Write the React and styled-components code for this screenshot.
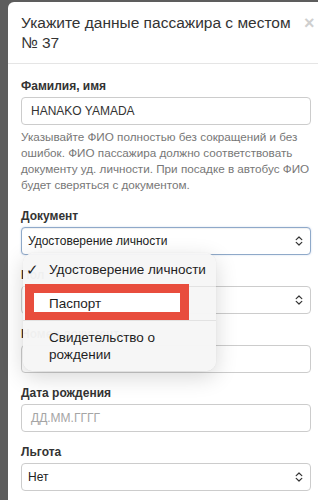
import React from 'react';
import styled, { createGlobalStyle, css } from 'styled-components';

const GlobalStyle = createGlobalStyle`
  html, body {
    margin: 0;
    padding: 0;
    overflow: hidden;
    background: #5d5d5d;
  }
  body {
    font-family: "Liberation Sans", Helvetica, Arial, sans-serif;
    color: #333;
  }
`;

const Backdrop = styled.div`
  height: 100vh;
  padding: 2px 0 0 8px;
  box-sizing: border-box;
`;

const Modal = styled.div`
  position: relative;
  width: 316px;
  min-height: 498px;
  background: #fff;
  border-radius: 6px 0 0 0;
`;

const Header = styled.div`
  display: flex;
  align-items: flex-start;
  padding: 11px 10px 10px 13px;
  border-bottom: 1px solid #e5e5e5;
`;

const Title = styled.h4`
  flex: 1;
  margin: 0;
  font-size: 15.5px;
  line-height: 20px;
  font-weight: normal;
  color: #333;
`;

const Close = styled.span`
  width: 10px;
  margin-top: 1px;
  font-size: 18px;
  line-height: 18px;
  font-weight: bold;
  color: #cfcfcf;
`;

const Body = styled.div`
  padding: 14px 13px 0 13px;
`;

const Group = styled.div`
  margin-bottom: ${({ $tight }) => ($tight ? '4px' : '12px')};
`;

const Label = styled.div`
  font-size: 12px;
  line-height: 16px;
  font-weight: bold;
  color: #333;
  margin-bottom: 3px;
`;

const fieldBox = css`
  display: flex;
  align-items: center;
  height: 28px;
  box-sizing: border-box;
  border: 1px solid #ccc;
  border-radius: 4px;
  background: #fff;
  font-size: 12px;
`;

const Input = styled.div`
  ${fieldBox};
  padding: 0 9px;
  color: ${({ $placeholder }) => ($placeholder ? '#a5a5a5' : '#333')};
`;

const Select = styled.div`
  ${fieldBox};
  justify-content: space-between;
  padding: 0 7px 0 6px;
  color: #222;
  ${({ $focused }) =>
    $focused &&
    css`
      border-color: #8fa9c9;
      box-shadow: inset 0 1px 1px rgba(0, 0, 0, 0.06), 0 0 2px rgba(102, 140, 200, 0.35);
    `}
`;

const Help = styled.p`
  margin: 4px 0 15px;
  font-size: 11.7px;
  line-height: 16px;
  color: #777;
`;

const Chevron = () => (
  <svg width="8" height="10" viewBox="0 0 8 10" fill="none" stroke="#333" strokeWidth="1.2" strokeLinecap="round" strokeLinejoin="round">
    <path d="M1.2 3.6 L4 1 L6.8 3.6" />
    <path d="M1.2 6.4 L4 9 L6.8 6.4" />
  </svg>
);

const Menu = styled.div`
  position: absolute;
  left: 15px;
  top: 251px;
  width: 193px;
  border-radius: 10px;
  background: rgba(246, 246, 246, 0.97);
  box-shadow: 0 6px 22px rgba(0, 0, 0, 0.16), 0 0 1px rgba(0, 0, 0, 0.15);
  overflow: hidden;
`;

const Item = styled.div`
  position: relative;
  display: flex;
  padding: 8px 4px 8px 26px;
  font-size: 13.5px;
  line-height: 17px;
  color: #1e1e1e;
  & + & {
    border-top: 1px solid #e2e2e2;
  }
`;

const Check = styled.span`
  position: absolute;
  left: 3px;
  top: 8px;
  font-size: 15px;
`;

const ItemText = styled.span`
  position: relative;
  z-index: 1;
  white-space: ${({ $wrap }) => ($wrap ? 'normal' : 'nowrap')};
`;

const Marker = styled.span`
  position: absolute;
  left: 2px;
  top: -3px;
  width: 164px;
  height: 37px;
  box-sizing: border-box;
  border: 9px solid #e84d3d;
  background: #fff;
`;

const App = () => (
  <>
    <GlobalStyle />
    <Backdrop>
      <Modal>
        <Header>
          <Title>Укажите данные пассажира с местом № 37</Title>
          <Close>×</Close>
        </Header>
        <Body>
          <Group $tight>
            <Label>Фамилия, имя</Label>
            <Input>HANAKO YAMADA</Input>
          </Group>
          <Help>
            Указывайте ФИО полностью без сокращений и без ошибок. ФИО пассажира должно соответствовать
            документу уд. личности. При посадке в автобус ФИО будет сверяться с документом.
          </Help>
          <Group>
            <Label>Документ</Label>
            <Select $focused>
              <span>Удостоверение личности</span>
              <Chevron />
            </Select>
          </Group>
          <Group>
            <Label>Пол</Label>
            <Select>
              <span />
              <Chevron />
            </Select>
          </Group>
          <Group>
            <Label>Номер документа</Label>
            <Input />
          </Group>
          <Group>
            <Label>Дата рождения</Label>
            <Input $placeholder>ДД.ММ.ГГГГ</Input>
          </Group>
          <Group>
            <Label>Льгота</Label>
            <Select>
              <span>Нет</span>
              <Chevron />
            </Select>
          </Group>
        </Body>
        <Menu>
          <Item>
            <Check>✓</Check>
            <ItemText>Удостоверение личности</ItemText>
          </Item>
          <Item>
            <Marker />
            <ItemText>Паспорт</ItemText>
          </Item>
          <Item>
            <ItemText $wrap>Свидетельство о рождении</ItemText>
          </Item>
        </Menu>
      </Modal>
    </Backdrop>
  </>
);

export default App;
